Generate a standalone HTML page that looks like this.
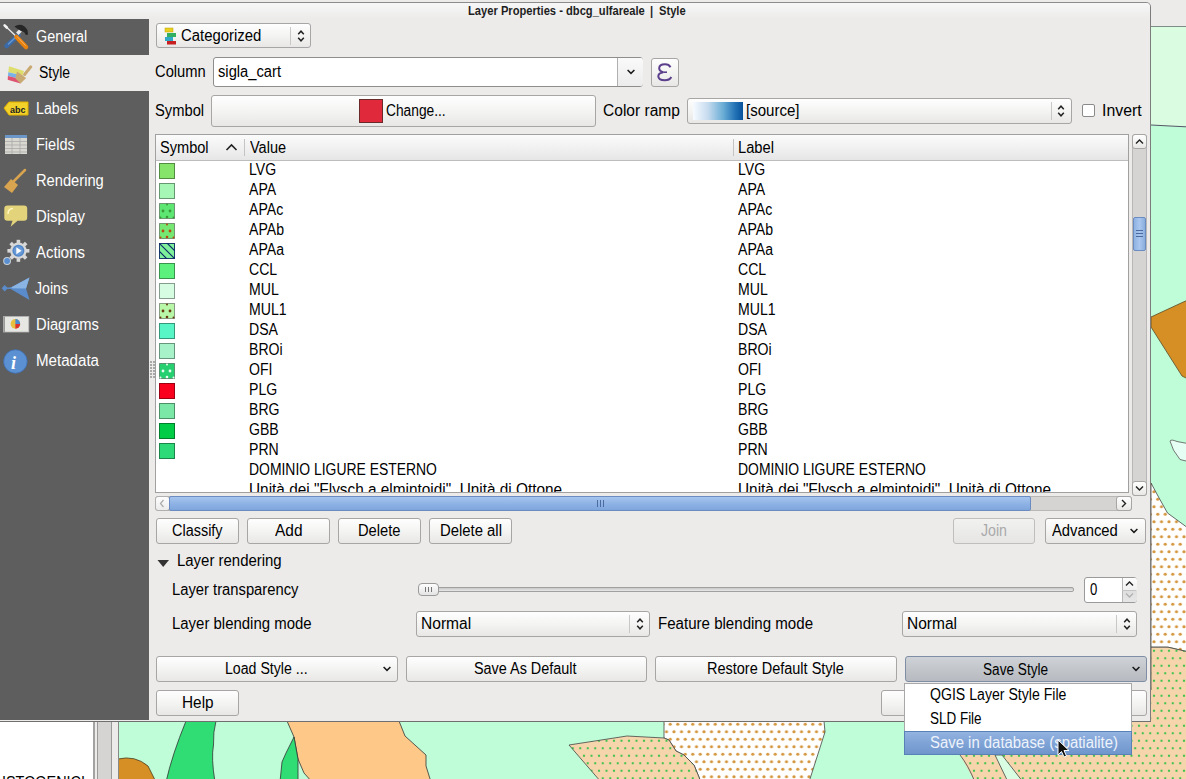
<!DOCTYPE html>
<html><head><meta charset="utf-8"><style>
html,body{margin:0;padding:0;}
body{width:1186px;height:779px;overflow:hidden;position:relative;font-family:'Liberation Sans', sans-serif;background:#befdd8;}
.b{position:absolute;}
.t{position:absolute;white-space:nowrap;font-family:'Liberation Sans', sans-serif;}
</style></head><body>
<svg class="b" style="left:0;top:0" width="1186" height="779">
<defs>
<pattern id="dotO" x="2.75" y="7.95" width="7.5" height="15" patternUnits="userSpaceOnUse"><rect width="7.5" height="15" fill="#ffffff"/><circle cx="3.75" cy="3.75" r="1.6" fill="#d4963c"/><circle cx="0" cy="11.25" r="1.6" fill="#d4963c"/><circle cx="7.5" cy="11.25" r="1.6" fill="#d4963c"/></pattern>
<pattern id="dotG" x="2.75" y="2" width="7.5" height="15" patternUnits="userSpaceOnUse"><rect width="7.5" height="15" fill="#f6d5ad"/><rect x="2.75" y="2.75" width="2" height="2" fill="#3ec24a"/><rect x="-1" y="10.25" width="2" height="2" fill="#3ec24a"/><rect x="6.5" y="10.25" width="2" height="2" fill="#3ec24a"/></pattern>
</defs>
<rect width="1186" height="779" fill="#befdd8"/>
<rect x="0" y="0" width="1186" height="26" fill="#ecebea"/>
<rect x="1151" y="26" width="35" height="1" fill="#7d8c84"/>
<path d="M1151 27 L1190 27 L1190 127 L1170 126 L1151 125 Z" fill="#dafde2"/>
<path d="M1151 125 L1170 126 L1190 127" fill="none" stroke="#556" stroke-width="1"/>
<path d="M1151 317 L1179 304 L1190 299 L1190 380 L1182 376 L1151 327 Z" fill="#d68f24" stroke="#5a4a2a" stroke-width="0.8"/>
<path d="M1190 444 L1177 441.5 Q1171 439 1170 441 Q1172 450 1180 459.5 L1190 462 Z" fill="#e6fff4" stroke="#555" stroke-width="0.8"/>
<path d="M1151 483 Q1160 500 1167.5 513 L1190 529.5 L1190 652.3 L1168 647.2 L1151 647.2 Z" fill="url(#dotO)" stroke="#444" stroke-width="0.8"/>
<path d="M1151 647.2 L1168 647.2 L1190 652.3 L1190 782 L1151 782 Z" fill="url(#dotG)" stroke="#444" stroke-width="0.8"/>
<path d="M118 759 Q135 755 148 766 L156 782 L118 782 Z" fill="#d68f24" stroke="#4a3a20" stroke-width="0.8"/>
<path d="M186 721 L216 721 Q213 732 213.5 745 Q211 758 215 782 L166 782 Q172 755 186 721 Z" fill="#30dc74" stroke="#333" stroke-width="0.8"/>
<path d="M287 721 L399 721 L405 736 L426 755 L426 766 L431 782 L312 782 L304 773 L298 759 L294 737 Z" fill="#fdc888" stroke="#333" stroke-width="0.8"/>
<path d="M294 737 L298 759 L298 782 L280 782 L282 762 L286 753 Z" fill="#30dc74" stroke="#333" stroke-width="0.8"/>
<path d="M664 721 L824 721 L825 732 L809 782 L701 782 L694 765 L684 755 L676 751 L669 740 L664 738 Z" fill="url(#dotO)" stroke="#444" stroke-width="0.8"/>
<path d="M569 745 L627 736 L664 738 L669 740 L676 751 L684 755 L694 765 L701 782 L601 782 Z" fill="url(#dotG)" stroke="#444" stroke-width="0.8"/>
<path d="M955 690 L1190 690 L1190 782 L975 782 L960 755 Z" fill="url(#dotG)"/><path d="M960 755 Q968 765 975 782" fill="none" stroke="#444" stroke-width="0.8"/>
<path d="M995 755 L1002 755 L1023 782 L1008 782 Z" fill="#d8fde2" stroke="#444" stroke-width="0.8"/>
</svg>
<div class="b" style="left:0px;top:722px;width:93px;height:57px;background:#fff;"></div>
<div class="b" style="left:93px;top:722px;width:2px;height:57px;background:#a3a3a3;"></div>
<div class="b" style="left:95px;top:722px;width:2px;height:57px;background:#ecebea;"></div>
<div class="b" style="left:97px;top:722px;width:1px;height:57px;background:#9a9a9a;"></div>
<div class="b" style="left:98px;top:722px;width:13px;height:57px;background:#d6d4d2;"></div>
<div class="b" style="left:111px;top:722px;width:1px;height:57px;background:#9a9a9a;"></div>
<div class="b" style="left:112px;top:722px;width:6px;height:57px;background:#ecebea;"></div>
<div class="b" style="left:118px;top:722px;width:1px;height:57px;background:#888;"></div>
<div class="t" style="left:2.0px;top:774.9px;font-size:16px;line-height:16px;color:#000;font-weight:normal;transform:scaleX(0.900);transform-origin:0 0;">ISTOGENICI</div>
<div class="b" style="left:0px;top:2px;width:1151px;height:720px;background:#ecebea;border-top:1px solid #8c8c8c;border-right:1px solid #7c7c7c;border-bottom:1px solid #6f6f6f;border-top-right-radius:5px;box-sizing:border-box;"></div>
<div class="b" style="left:0px;top:3px;width:1150px;height:16px;background:linear-gradient(#f7f7f7,#ecebea);border-top-right-radius:4px;"></div>
<div class="t" style="left:468.0px;top:4.7px;font-size:12px;line-height:12px;color:#1e1e1e;font-weight:bold;transform:scaleX(0.930);transform-origin:0 0;">Layer Properties - dbcg_ulfareale</div>
<div class="t" style="left:649.6px;top:4.7px;font-size:12px;line-height:12px;color:#1e1e1e;font-weight:bold;transform:scaleX(0.930);transform-origin:0 0;">|</div>
<div class="t" style="left:659.4px;top:4.7px;font-size:12px;line-height:12px;color:#1e1e1e;font-weight:bold;transform:scaleX(0.930);transform-origin:0 0;">Style</div>
<div class="b" style="left:0px;top:19px;width:149px;height:701px;background:#5e5e5e;"></div>
<div class="b" style="left:0px;top:55px;width:149px;height:36px;background:#ecebea;"></div>
<div class="t" style="left:36.0px;top:28.7px;font-size:16px;line-height:16px;color:#fff;font-weight:normal;transform:scaleX(0.899);transform-origin:0 0;">General</div>
<div class="t" style="left:38.5px;top:64.7px;font-size:16px;line-height:16px;color:#000;font-weight:normal;transform:scaleX(0.872);transform-origin:0 0;">Style</div>
<div class="t" style="left:36.0px;top:100.7px;font-size:16px;line-height:16px;color:#fff;font-weight:normal;transform:scaleX(0.891);transform-origin:0 0;">Labels</div>
<div class="t" style="left:36.0px;top:136.7px;font-size:16px;line-height:16px;color:#fff;font-weight:normal;transform:scaleX(0.907);transform-origin:0 0;">Fields</div>
<div class="t" style="left:36.0px;top:172.7px;font-size:16px;line-height:16px;color:#fff;font-weight:normal;transform:scaleX(0.918);transform-origin:0 0;">Rendering</div>
<div class="t" style="left:36.0px;top:208.7px;font-size:16px;line-height:16px;color:#fff;font-weight:normal;transform:scaleX(0.932);transform-origin:0 0;">Display</div>
<div class="t" style="left:36.0px;top:244.7px;font-size:16px;line-height:16px;color:#fff;font-weight:normal;transform:scaleX(0.932);transform-origin:0 0;">Actions</div>
<div class="t" style="left:34.5px;top:280.7px;font-size:16px;line-height:16px;color:#fff;font-weight:normal;transform:scaleX(0.883);transform-origin:0 0;">Joins</div>
<div class="t" style="left:36.0px;top:316.7px;font-size:16px;line-height:16px;color:#fff;font-weight:normal;transform:scaleX(0.920);transform-origin:0 0;">Diagrams</div>
<div class="t" style="left:36.0px;top:352.7px;font-size:16px;line-height:16px;color:#fff;font-weight:normal;transform:scaleX(0.944);transform-origin:0 0;">Metadata</div>
<svg class="b" style="left:0;top:19px" width="40" height="360">
<g>
<path d="M18.5 16 L6.5 27" stroke="#3a6aa8" stroke-width="4.5" stroke-linecap="round"/>
<path d="M8.5 25 L16 18" stroke="#6a9ad0" stroke-width="1.2" stroke-linecap="round"/>
<path d="M17.3 14.7 L20.7 11.3" stroke="#e8e8e8" stroke-width="3.5"/>
<path d="M14.4 7.5 Q18 5 22 6 Q25 7 27.5 11 L28 15.5 L26 16 L24 13 L21 12 L17 9.5 Z" fill="#262626"/>
<path d="M5 6.7 L15 16.3" stroke="#e6e6e6" stroke-width="1.5" stroke-linecap="round"/>
<path d="M4.6 6.3 L6.8 8.5" stroke="#f4f4f4" stroke-width="2.6" stroke-linecap="round"/>
<path d="M16.5 18 L26 28" stroke="#e8820e" stroke-width="4.5" stroke-linecap="round"/>
<path d="M17.5 18 L25.5 26.5" stroke="#f8b060" stroke-width="1" stroke-linecap="round"/>
</g>
<g transform="translate(0,36)">
<path d="M9 11.3 L24 16 L22.5 20.5 L8.3 17.2 Z" fill="#dede6e"/>
<path d="M8.3 17.2 L22.5 20.5 L21.4 24.3 L7.9 21 Z" fill="#7ab2e8"/>
<path d="M7.9 21 L21.4 24.3 L20.5 28.5 L7.7 24.7 Z" fill="#de5272"/>
<path d="M17 16.5 L26.2 23 L20.5 28.5 L15.4 23.6 Z" fill="#c9aa72"/>
<path d="M24.6 19.5 L30.8 11.8" stroke="#c9aa72" stroke-width="3" stroke-linecap="round"/>
</g>
<g transform="translate(0,72)">
<path d="M4 17 L9 11 L28 11 L28 24 L9 24 Z" fill="#f2d22a" stroke="#e0b000" stroke-width="1"/>
<text x="10" y="21.5" font-family="Liberation Sans" font-size="9" font-weight="bold" fill="#222">abc</text>
</g>
<g transform="translate(0,108)">
<rect x="5" y="8" width="22" height="19" fill="#d8d8d0"/>
<rect x="5" y="8" width="22" height="3" fill="#6c96c8"/>
<path d="M5 14.5 H27 M5 18 H27 M5 21.5 H27 M5 25 H27 M12 11 V27 M20 11 V27" stroke="#aaa" stroke-width="0.8"/>
</g>
<g transform="translate(0,144)">
<path d="M14 18 L25 7" stroke="#d9a450" stroke-width="2.5" stroke-linecap="round"/>
<path d="M4 24 L11 16 L18 22 L12 30 Z" fill="#d9a450"/>
</g>
<g transform="translate(0,180)">
<path d="M7.5 6.5 Q4.3 6.5 4.3 9.5 L4.3 18.8 Q4.3 21.8 7.5 21.8 L12.5 21.8 L10.6 27.7 L17.5 21.8 L24 21.8 Q27.2 21.8 27.2 18.8 L27.2 9.5 Q27.2 6.5 24 6.5 Z" fill="#e3d37a"/>
<path d="M8 15 Q8 9.5 13 9.5" fill="none" stroke="#fff6c0" stroke-width="1.5"/>
</g>
<g transform="translate(0,216)">
<rect x="16.6" y="4.8" width="3.6" height="3.5" fill="#d8d8d8" transform="rotate(0 18.4 15.8)"/><rect x="16.6" y="4.8" width="3.6" height="3.5" fill="#d8d8d8" transform="rotate(45 18.4 15.8)"/><rect x="16.6" y="4.8" width="3.6" height="3.5" fill="#d8d8d8" transform="rotate(90 18.4 15.8)"/><rect x="16.6" y="4.8" width="3.6" height="3.5" fill="#d8d8d8" transform="rotate(135 18.4 15.8)"/><rect x="16.6" y="4.8" width="3.6" height="3.5" fill="#d8d8d8" transform="rotate(180 18.4 15.8)"/><rect x="16.6" y="4.8" width="3.6" height="3.5" fill="#d8d8d8" transform="rotate(225 18.4 15.8)"/><rect x="16.6" y="4.8" width="3.6" height="3.5" fill="#d8d8d8" transform="rotate(270 18.4 15.8)"/><rect x="16.6" y="4.8" width="3.6" height="3.5" fill="#d8d8d8" transform="rotate(315 18.4 15.8)"/>
<circle cx="18.4" cy="15.8" r="8.2" fill="#d8d8d8"/>
<circle cx="18.4" cy="15.8" r="6" fill="#4f86c8"/>
<circle cx="18.4" cy="15.8" r="4.6" fill="#6a9ad6"/>
<path d="M16.3 12.3 L21.6 15.8 L16.3 19.3 Z" fill="#fff"/>
<circle cx="7.1" cy="26" r="3.9" fill="#c8d0d8"/>
<circle cx="7.1" cy="26" r="2.9" fill="#5b8fd0"/>
</g>
<g transform="translate(0,252)">
<path d="M9.5 17.2 L29.5 6.6 L26 17.5 L29.5 29 Z" fill="#5a8ccc"/>
<path d="M9.5 17.2 L29.5 6.6 L26 17.5 Z" fill="#8ab4e4"/>
<path d="M4.7 14 L7.7 17.2 L4.7 20.4 L1.7 17.2 Z" fill="#5a8ccc"/>
<path d="M6 17.2 H12" stroke="#5a8ccc" stroke-width="1.5"/>
</g>
<g transform="translate(0,288)">
<rect x="3.5" y="9.6" width="25.3" height="15.4" fill="#e6e6e2" stroke="#b8b8b8" stroke-width="0.8"/>
<rect x="3.5" y="9.6" width="1.5" height="15.4" fill="#9a9a9a"/>
<circle cx="15.4" cy="16.9" r="4.8" fill="#e8c040"/>
<path d="M15.4 16.9 L15.4 12.1 A4.8 4.8 0 0 1 20.2 16.9 Z" fill="#4a8ad0"/>
<path d="M15.4 16.9 L20.2 16.9 A4.8 4.8 0 0 1 15.4 21.7 Z" fill="#d83030"/>
</g>
<g transform="translate(0,324)">
<circle cx="15.4" cy="18.5" r="11.8" fill="#5b90d2"/>
<circle cx="15.4" cy="18.5" r="11.8" fill="none" stroke="#3f6fae" stroke-width="0.8"/>
<text x="11" y="26" font-family="Liberation Serif" font-size="18" font-style="italic" font-weight="bold" fill="#fff">i</text>
</g>
</svg>
<div class="b" style="left:150px;top:361px;width:1.5px;height:1.5px;background:#a8a8a8;"></div>
<div class="b" style="left:153px;top:361px;width:1.5px;height:1.5px;background:#a8a8a8;"></div>
<div class="b" style="left:150px;top:364px;width:1.5px;height:1.5px;background:#a8a8a8;"></div>
<div class="b" style="left:153px;top:364px;width:1.5px;height:1.5px;background:#a8a8a8;"></div>
<div class="b" style="left:150px;top:367px;width:1.5px;height:1.5px;background:#a8a8a8;"></div>
<div class="b" style="left:153px;top:367px;width:1.5px;height:1.5px;background:#a8a8a8;"></div>
<div class="b" style="left:150px;top:370px;width:1.5px;height:1.5px;background:#a8a8a8;"></div>
<div class="b" style="left:153px;top:370px;width:1.5px;height:1.5px;background:#a8a8a8;"></div>
<div class="b" style="left:150px;top:373px;width:1.5px;height:1.5px;background:#a8a8a8;"></div>
<div class="b" style="left:153px;top:373px;width:1.5px;height:1.5px;background:#a8a8a8;"></div>
<div class="b" style="left:150px;top:376px;width:1.5px;height:1.5px;background:#a8a8a8;"></div>
<div class="b" style="left:153px;top:376px;width:1.5px;height:1.5px;background:#a8a8a8;"></div>
<div class="b" style="left:156px;top:23px;width:155px;height:25px;background:linear-gradient(#fefefe,#f4f4f3 50%,#e8e7e6);border:1px solid #a6a6a6;border-radius:3px;box-sizing:border-box;"></div>
<div class="b" style="left:290px;top:27px;width:1px;height:18px;background:#c8c8c8;"></div>
<svg class="b" style="left:296.0px;top:27.5px" width="10" height="16"><path d="M2.2 6.2 L5 3.2 L7.8 6.2 M2.2 9.8 L5 12.8 L7.8 9.8" fill="none" stroke="#222" stroke-width="1.5"/></svg>
<svg class="b" style="left:164px;top:27px" width="14" height="18">
<rect x="1" y="1" width="8" height="4" fill="#e8d020" stroke="#c0a000" stroke-width="0.5"/>
<rect x="3" y="6" width="9" height="4" fill="#30b060"/>
<rect x="1" y="10" width="8" height="4" fill="#30a8c8"/>
<rect x="3" y="14" width="9" height="3.5" fill="#c82020"/>
</svg>
<div class="t" style="left:180.7px;top:27.9px;font-size:16px;line-height:16px;color:#000;font-weight:normal;transform:scaleX(0.931);transform-origin:0 0;">Categorized</div>
<div class="t" style="left:154.5px;top:63.7px;font-size:16px;line-height:16px;color:#000;font-weight:normal;transform:scaleX(0.920);transform-origin:0 0;">Column</div>
<div class="b" style="left:213px;top:57px;width:430px;height:30px;background:#fff;border:1px solid #8d8d8d;border-radius:3px;box-sizing:border-box;"></div>
<div class="b" style="left:617px;top:58px;width:25px;height:28px;background:linear-gradient(#fafafa,#ececec);border-left:1px solid #b0b0b0;border-radius:0 2px 2px 0;"></div>
<svg class="b" style="left:625px;top:68px" width="12" height="8"><path d="M2.6 2 L6 5.4 L9.4 2" fill="none" stroke="#1a1a1a" stroke-width="1.5"/></svg>
<div class="t" style="left:217.5px;top:63.7px;font-size:16px;line-height:16px;color:#000;font-weight:normal;transform:scaleX(0.920);transform-origin:0 0;">sigla_cart</div>
<div class="b" style="left:651px;top:58px;width:28px;height:29px;background:linear-gradient(#fefefe,#f4f4f3 50%,#e8e7e6);border:1px solid #a7a6a5;border-radius:3px;box-sizing:border-box;"></div>
<svg class="b" style="left:651px;top:58px" width="28" height="29"><path d="M19.5 9.2 Q18 6.3 14 6.3 Q8.2 6.3 8.2 10.3 Q8.2 13.2 12.2 14.2 Q7.3 15 7.3 18.3 Q7.3 22.3 13.8 22.3 Q18.6 22.3 20.3 19" fill="none" stroke="#5b3f8c" stroke-width="2"/><path d="M12.2 14.2 L16 14.2" stroke="#5b3f8c" stroke-width="1.6"/></svg>
<div class="t" style="left:154.5px;top:102.9px;font-size:16px;line-height:16px;color:#000;font-weight:normal;transform:scaleX(0.920);transform-origin:0 0;">Symbol</div>
<div class="b" style="left:211px;top:95px;width:385px;height:32px;background:linear-gradient(#fefefe,#f4f4f3 50%,#e8e7e6);border:1px solid #a7a6a5;border-radius:3px;box-sizing:border-box;"></div>
<div class="b" style="left:359px;top:99px;width:24px;height:24px;background:#e0293b;border:1px solid #6a2a2a;box-sizing:border-box;"></div>
<div class="t" style="left:386.0px;top:102.9px;font-size:16px;line-height:16px;color:#000;font-weight:normal;transform:scaleX(0.860);transform-origin:0 0;">Change...</div>
<div class="t" style="left:602.5px;top:102.9px;font-size:16px;line-height:16px;color:#000;font-weight:normal;transform:scaleX(0.972);transform-origin:0 0;">Color ramp</div>
<div class="b" style="left:687px;top:98px;width:385px;height:26px;background:linear-gradient(#fefefe,#f4f4f3 50%,#e8e7e6);border:1px solid #a7a6a5;border-radius:3px;box-sizing:border-box;"></div>
<div class="b" style="left:693px;top:102px;width:50px;height:18px;background:linear-gradient(90deg,#f7fbff,#c6dbef 30%,#6baed6 60%,#2171b5 85%,#08519c);"></div>
<div class="t" style="left:746.0px;top:102.9px;font-size:16px;line-height:16px;color:#000;font-weight:normal;transform:scaleX(0.940);transform-origin:0 0;">[source]</div>
<div class="b" style="left:1051px;top:102px;width:1px;height:18px;background:#c8c8c8;"></div>
<svg class="b" style="left:1055.5px;top:103px" width="10" height="16"><path d="M2.2 6.2 L5 3.2 L7.8 6.2 M2.2 9.8 L5 12.8 L7.8 9.8" fill="none" stroke="#222" stroke-width="1.5"/></svg>
<div class="b" style="left:1082px;top:104px;width:13px;height:13px;background:#fff;border:1px solid #8a8a8a;border-radius:2px;box-sizing:border-box;"></div>
<div class="t" style="left:1102.0px;top:102.9px;font-size:16px;line-height:16px;color:#000;font-weight:normal;transform:scaleX(0.990);transform-origin:0 0;">Invert</div>
<div class="b" style="left:155px;top:134px;width:974px;height:359px;background:#fff;border:1px solid #a0a0a0;box-sizing:border-box;"></div>
<div class="b" style="left:156px;top:135px;width:972px;height:25px;background:linear-gradient(#fbfbfb,#efefef 60%,#e6e6e6);border-bottom:1px solid #bdbdbd;"></div>
<div class="b" style="left:244px;top:139px;width:1px;height:17px;background:#c4c4c4;"></div>
<div class="b" style="left:733px;top:139px;width:1px;height:17px;background:#c4c4c4;"></div>
<div class="t" style="left:159.6px;top:139.7px;font-size:16px;line-height:16px;color:#000;font-weight:normal;transform:scaleX(0.911);transform-origin:0 0;">Symbol</div>
<svg class="b" style="left:225px;top:142px" width="13" height="10"><path d="M1.5 8 L6.5 3 L11.5 8" fill="none" stroke="#222" stroke-width="1.6"/></svg>
<div class="t" style="left:249.8px;top:139.7px;font-size:16px;line-height:16px;color:#000;font-weight:normal;transform:scaleX(0.906);transform-origin:0 0;">Value</div>
<div class="t" style="left:738.4px;top:139.7px;font-size:16px;line-height:16px;color:#000;font-weight:normal;transform:scaleX(0.920);transform-origin:0 0;">Label</div>
<div class="b" style="left:156px;top:160px;width:972px;height:332px;overflow:hidden">
<div class="b" style="left:3px;top:3px;width:16px;height:16px;background:#86e46a;border:1px solid rgba(0,0,0,0.38);box-sizing:border-box"></div>
<div class="b" style="left:3px;top:23px;width:16px;height:16px;background:#a6f6b6;border:1px solid rgba(0,0,0,0.38);box-sizing:border-box"></div>
<svg class="b" style="left:3px;top:43px" width="16" height="16"><rect x="0.5" y="0.5" width="15" height="15" fill="#5ee672" stroke="rgba(0,0,0,0.38)" stroke-width="1"/><circle cx="4" cy="8" r="1.4" fill="#3a9a3a"/><circle cx="11" cy="8" r="1.4" fill="#3a9a3a"/><circle cx="8" cy="14" r="1.3" fill="#3a9a3a"/><circle cx="8" cy="1.5" r="1" fill="#3a9a3a"/><circle cx="14.5" cy="14.5" r="1" fill="#3a9a3a"/><circle cx="1.5" cy="14.5" r="1" fill="#3a9a3a"/></svg>
<svg class="b" style="left:3px;top:63px" width="16" height="16"><rect x="0.5" y="0.5" width="15" height="15" fill="#74e872" stroke="rgba(0,0,0,0.38)" stroke-width="1"/><circle cx="4" cy="8" r="1.4" fill="#b84a10"/><circle cx="11" cy="8" r="1.4" fill="#b84a10"/><circle cx="8" cy="14" r="1.3" fill="#b84a10"/><circle cx="8" cy="1.5" r="1" fill="#b84a10"/><circle cx="14.5" cy="14.5" r="1" fill="#b84a10"/><circle cx="1.5" cy="14.5" r="1" fill="#b84a10"/></svg>
<svg class="b" style="left:3px;top:83px" width="16" height="16"><rect x="0.5" y="0.5" width="15" height="15" fill="#7ef09a" stroke="#1a3a6a" stroke-width="1"/><path d="M0 0 L16 16 M0 8 L8 16 M8 0 L16 8" stroke="#0a2a6a" stroke-width="1.1"/></svg>
<div class="b" style="left:3px;top:103px;width:16px;height:16px;background:#5cf07c;border:1px solid rgba(0,0,0,0.38);box-sizing:border-box"></div>
<div class="b" style="left:3px;top:123px;width:16px;height:16px;background:#d6fde2;border:1px solid rgba(0,0,0,0.38);box-sizing:border-box"></div>
<svg class="b" style="left:3px;top:143px" width="16" height="16"><rect x="0.5" y="0.5" width="15" height="15" fill="#b8f6a8" stroke="rgba(0,0,0,0.38)" stroke-width="1"/><circle cx="4" cy="8" r="1.4" fill="#6a3a10"/><circle cx="11" cy="8" r="1.4" fill="#6a3a10"/><circle cx="8" cy="14" r="1.3" fill="#6a3a10"/><circle cx="8" cy="1.5" r="1" fill="#6a3a10"/><circle cx="14.5" cy="14.5" r="1" fill="#6a3a10"/><circle cx="1.5" cy="14.5" r="1" fill="#6a3a10"/></svg>
<div class="b" style="left:3px;top:163px;width:16px;height:16px;background:#58f6c6;border:1px solid rgba(0,0,0,0.38);box-sizing:border-box"></div>
<div class="b" style="left:3px;top:183px;width:16px;height:16px;background:#a8f2ca;border:1px solid rgba(0,0,0,0.38);box-sizing:border-box"></div>
<svg class="b" style="left:3px;top:203px" width="16" height="16"><rect x="0.5" y="0.5" width="15" height="15" fill="#26d070" stroke="rgba(0,0,0,0.38)" stroke-width="1"/><circle cx="4" cy="8" r="1.4" fill="#e8fff0"/><circle cx="11" cy="8" r="1.4" fill="#e8fff0"/><circle cx="8" cy="14" r="1.3" fill="#e8fff0"/><circle cx="8" cy="1.5" r="1" fill="#e8fff0"/><circle cx="14.5" cy="14.5" r="1" fill="#e8fff0"/><circle cx="1.5" cy="14.5" r="1" fill="#e8fff0"/></svg>
<div class="b" style="left:3px;top:223px;width:16px;height:16px;background:#f8001e;border:1px solid rgba(0,0,0,0.38);box-sizing:border-box"></div>
<div class="b" style="left:3px;top:243px;width:16px;height:16px;background:#7ce8a8;border:1px solid rgba(0,0,0,0.38);box-sizing:border-box"></div>
<div class="b" style="left:3px;top:263px;width:16px;height:16px;background:#00cc46;border:1px solid rgba(0,0,0,0.38);box-sizing:border-box"></div>
<div class="b" style="left:3px;top:283px;width:16px;height:16px;background:#2ed978;border:1px solid rgba(0,0,0,0.38);box-sizing:border-box"></div>
<div class="t" style="left:92.6px;top:1.9px;font-size:16px;line-height:16px;color:#000;font-weight:normal;transform:scaleX(0.880);transform-origin:0 0;">LVG</div>
<div class="t" style="left:581.6px;top:1.9px;font-size:16px;line-height:16px;color:#000;font-weight:normal;transform:scaleX(0.880);transform-origin:0 0;">LVG</div>
<div class="t" style="left:92.6px;top:21.9px;font-size:16px;line-height:16px;color:#000;font-weight:normal;transform:scaleX(0.880);transform-origin:0 0;">APA</div>
<div class="t" style="left:581.6px;top:21.9px;font-size:16px;line-height:16px;color:#000;font-weight:normal;transform:scaleX(0.880);transform-origin:0 0;">APA</div>
<div class="t" style="left:92.6px;top:41.9px;font-size:16px;line-height:16px;color:#000;font-weight:normal;transform:scaleX(0.880);transform-origin:0 0;">APAc</div>
<div class="t" style="left:581.6px;top:41.9px;font-size:16px;line-height:16px;color:#000;font-weight:normal;transform:scaleX(0.880);transform-origin:0 0;">APAc</div>
<div class="t" style="left:92.6px;top:61.9px;font-size:16px;line-height:16px;color:#000;font-weight:normal;transform:scaleX(0.880);transform-origin:0 0;">APAb</div>
<div class="t" style="left:581.6px;top:61.9px;font-size:16px;line-height:16px;color:#000;font-weight:normal;transform:scaleX(0.880);transform-origin:0 0;">APAb</div>
<div class="t" style="left:92.6px;top:81.9px;font-size:16px;line-height:16px;color:#000;font-weight:normal;transform:scaleX(0.880);transform-origin:0 0;">APAa</div>
<div class="t" style="left:581.6px;top:81.9px;font-size:16px;line-height:16px;color:#000;font-weight:normal;transform:scaleX(0.880);transform-origin:0 0;">APAa</div>
<div class="t" style="left:92.6px;top:101.9px;font-size:16px;line-height:16px;color:#000;font-weight:normal;transform:scaleX(0.880);transform-origin:0 0;">CCL</div>
<div class="t" style="left:581.6px;top:101.9px;font-size:16px;line-height:16px;color:#000;font-weight:normal;transform:scaleX(0.880);transform-origin:0 0;">CCL</div>
<div class="t" style="left:92.6px;top:121.9px;font-size:16px;line-height:16px;color:#000;font-weight:normal;transform:scaleX(0.880);transform-origin:0 0;">MUL</div>
<div class="t" style="left:581.6px;top:121.9px;font-size:16px;line-height:16px;color:#000;font-weight:normal;transform:scaleX(0.880);transform-origin:0 0;">MUL</div>
<div class="t" style="left:92.6px;top:141.9px;font-size:16px;line-height:16px;color:#000;font-weight:normal;transform:scaleX(0.880);transform-origin:0 0;">MUL1</div>
<div class="t" style="left:581.6px;top:141.9px;font-size:16px;line-height:16px;color:#000;font-weight:normal;transform:scaleX(0.880);transform-origin:0 0;">MUL1</div>
<div class="t" style="left:92.6px;top:161.9px;font-size:16px;line-height:16px;color:#000;font-weight:normal;transform:scaleX(0.880);transform-origin:0 0;">DSA</div>
<div class="t" style="left:581.6px;top:161.9px;font-size:16px;line-height:16px;color:#000;font-weight:normal;transform:scaleX(0.880);transform-origin:0 0;">DSA</div>
<div class="t" style="left:92.6px;top:181.9px;font-size:16px;line-height:16px;color:#000;font-weight:normal;transform:scaleX(0.880);transform-origin:0 0;">BROi</div>
<div class="t" style="left:581.6px;top:181.9px;font-size:16px;line-height:16px;color:#000;font-weight:normal;transform:scaleX(0.880);transform-origin:0 0;">BROi</div>
<div class="t" style="left:92.6px;top:201.9px;font-size:16px;line-height:16px;color:#000;font-weight:normal;transform:scaleX(0.880);transform-origin:0 0;">OFI</div>
<div class="t" style="left:581.6px;top:201.9px;font-size:16px;line-height:16px;color:#000;font-weight:normal;transform:scaleX(0.880);transform-origin:0 0;">OFI</div>
<div class="t" style="left:92.6px;top:221.9px;font-size:16px;line-height:16px;color:#000;font-weight:normal;transform:scaleX(0.880);transform-origin:0 0;">PLG</div>
<div class="t" style="left:581.6px;top:221.9px;font-size:16px;line-height:16px;color:#000;font-weight:normal;transform:scaleX(0.880);transform-origin:0 0;">PLG</div>
<div class="t" style="left:92.6px;top:241.9px;font-size:16px;line-height:16px;color:#000;font-weight:normal;transform:scaleX(0.880);transform-origin:0 0;">BRG</div>
<div class="t" style="left:581.6px;top:241.9px;font-size:16px;line-height:16px;color:#000;font-weight:normal;transform:scaleX(0.880);transform-origin:0 0;">BRG</div>
<div class="t" style="left:92.6px;top:261.9px;font-size:16px;line-height:16px;color:#000;font-weight:normal;transform:scaleX(0.880);transform-origin:0 0;">GBB</div>
<div class="t" style="left:581.6px;top:261.9px;font-size:16px;line-height:16px;color:#000;font-weight:normal;transform:scaleX(0.880);transform-origin:0 0;">GBB</div>
<div class="t" style="left:92.6px;top:281.9px;font-size:16px;line-height:16px;color:#000;font-weight:normal;transform:scaleX(0.880);transform-origin:0 0;">PRN</div>
<div class="t" style="left:581.6px;top:281.9px;font-size:16px;line-height:16px;color:#000;font-weight:normal;transform:scaleX(0.880);transform-origin:0 0;">PRN</div>
<div class="t" style="left:92.6px;top:301.9px;font-size:16px;line-height:16px;color:#000;font-weight:normal;transform:scaleX(0.870);transform-origin:0 0;">DOMINIO LIGURE ESTERNO</div>
<div class="t" style="left:581.6px;top:301.9px;font-size:16px;line-height:16px;color:#000;font-weight:normal;transform:scaleX(0.870);transform-origin:0 0;">DOMINIO LIGURE ESTERNO</div>
<div class="t" style="left:92.6px;top:321.9px;font-size:16px;line-height:16px;color:#000;font-weight:normal;transform:scaleX(0.960);transform-origin:0 0;">Unità dei &quot;Flysch a elmintoidi&quot;, Unità di Ottone</div>
<div class="t" style="left:581.6px;top:321.9px;font-size:16px;line-height:16px;color:#000;font-weight:normal;transform:scaleX(0.960);transform-origin:0 0;">Unità dei &quot;Flysch a elmintoidi&quot;, Unità di Ottone</div>
</div>
<div class="b" style="left:1132px;top:134px;width:15px;height:362px;background:#d6d4d2;border:1px solid #b9b7b5;border-radius:3px;box-sizing:border-box;"></div>
<div class="b" style="left:1132px;top:134px;width:15px;height:15px;background:linear-gradient(#fefefe,#f4f4f3 50%,#e8e7e6);border:1px solid #a7a6a5;border-radius:3px;box-sizing:border-box;"></div>
<svg class="b" style="left:1134px;top:137px" width="11" height="9"><path d="M2 6.5 L5.5 3 L9 6.5" fill="none" stroke="#222" stroke-width="1.4"/></svg>
<div class="b" style="left:1132px;top:481px;width:15px;height:15px;background:linear-gradient(#fefefe,#f4f4f3 50%,#e8e7e6);border:1px solid #a7a6a5;border-radius:3px;box-sizing:border-box;"></div>
<svg class="b" style="left:1134px;top:484px" width="11" height="9"><path d="M2 2.5 L5.5 6 L9 2.5" fill="none" stroke="#222" stroke-width="1.4"/></svg>
<div class="b" style="left:1133px;top:217px;width:13px;height:34px;background:linear-gradient(90deg,#8fb2e2,#a9c6ee 50%,#8aaedd);border:1px solid #6a8cc0;border-radius:2px;box-sizing:border-box;"></div>
<div class="b" style="left:1136px;top:230px;width:7px;height:1px;background:#4a6aa0;"></div>
<div class="b" style="left:1136px;top:233px;width:7px;height:1px;background:#4a6aa0;"></div>
<div class="b" style="left:1136px;top:236px;width:7px;height:1px;background:#4a6aa0;"></div>
<div class="b" style="left:155px;top:496px;width:977px;height:15px;background:#d6d4d2;border:1px solid #b9b7b5;border-radius:3px;box-sizing:border-box;"></div>
<div class="b" style="left:155px;top:496px;width:15px;height:15px;background:linear-gradient(#fdfdfd,#ececec);border:1px solid #b0b0b0;border-radius:3px;box-sizing:border-box;"></div>
<svg class="b" style="left:157px;top:498px" width="11" height="11"><path d="M6.5 2 L3.5 5.5 L6.5 9" fill="none" stroke="#aaa" stroke-width="1.2"/></svg>
<div class="b" style="left:169px;top:496px;width:862px;height:15px;background:linear-gradient(#a6c4ee,#8bb0e4 60%,#7fa6dc);border:1px solid #6a8cc0;border-radius:2px;box-sizing:border-box;"></div>
<div class="b" style="left:597px;top:500px;width:1px;height:7px;background:#4a6aa0;"></div>
<div class="b" style="left:600px;top:500px;width:1px;height:7px;background:#4a6aa0;"></div>
<div class="b" style="left:603px;top:500px;width:1px;height:7px;background:#4a6aa0;"></div>
<div class="b" style="left:1116px;top:496px;width:16px;height:15px;background:linear-gradient(#fefefe,#f4f4f3 50%,#e8e7e6);border:1px solid #a7a6a5;border-radius:3px;box-sizing:border-box;"></div>
<svg class="b" style="left:1118px;top:498px" width="11" height="11"><path d="M4 2 L7.5 5.5 L4 9" fill="none" stroke="#222" stroke-width="1.4"/></svg>
<div class="b" style="left:156px;top:518px;width:83px;height:26px;background:linear-gradient(#fefefe,#f4f4f3 50%,#e8e7e6);border:1px solid #a7a6a5;border-radius:3px;box-sizing:border-box;"></div>
<div class="t" style="left:172.2px;top:522.9px;font-size:16px;line-height:16px;color:#000;font-weight:normal;transform:scaleX(0.903);transform-origin:0 0;">Classify</div>
<div class="b" style="left:247px;top:518px;width:83px;height:26px;background:linear-gradient(#fefefe,#f4f4f3 50%,#e8e7e6);border:1px solid #a7a6a5;border-radius:3px;box-sizing:border-box;"></div>
<div class="t" style="left:274.8px;top:522.9px;font-size:16px;line-height:16px;color:#000;font-weight:normal;transform:scaleX(0.966);transform-origin:0 0;">Add</div>
<div class="b" style="left:338px;top:518px;width:83px;height:26px;background:linear-gradient(#fefefe,#f4f4f3 50%,#e8e7e6);border:1px solid #a7a6a5;border-radius:3px;box-sizing:border-box;"></div>
<div class="t" style="left:358.2px;top:522.9px;font-size:16px;line-height:16px;color:#000;font-weight:normal;transform:scaleX(0.919);transform-origin:0 0;">Delete</div>
<div class="b" style="left:429px;top:518px;width:83px;height:26px;background:linear-gradient(#fefefe,#f4f4f3 50%,#e8e7e6);border:1px solid #a7a6a5;border-radius:3px;box-sizing:border-box;"></div>
<div class="t" style="left:439.5px;top:522.9px;font-size:16px;line-height:16px;color:#000;font-weight:normal;transform:scaleX(0.929);transform-origin:0 0;">Delete all</div>
<div class="b" style="left:953px;top:518px;width:82px;height:26px;background:linear-gradient(#f1f1f0,#e6e5e4);border:1px solid #bfbebd;border-radius:3px;box-sizing:border-box;"></div>
<div class="t" style="left:981.0px;top:522.9px;font-size:16px;line-height:16px;color:#a9a9a9;font-weight:normal;transform:scaleX(0.886);transform-origin:0 0;">Join</div>
<div class="b" style="left:1045px;top:518px;width:101px;height:26px;background:linear-gradient(#fefefe,#f4f4f3 50%,#e8e7e6);border:1px solid #a7a6a5;border-radius:3px;box-sizing:border-box;"></div>
<div class="t" style="left:1052.0px;top:522.9px;font-size:16px;line-height:16px;color:#000;font-weight:normal;transform:scaleX(0.925);transform-origin:0 0;">Advanced</div>
<svg class="b" style="left:1128px;top:527px" width="12" height="8"><path d="M2.6 2 L6 5.4 L9.4 2" fill="none" stroke="#1a1a1a" stroke-width="1.5"/></svg>
<svg class="b" style="left:157px;top:559px" width="13" height="9"><path d="M0.5 1 L12 1 L6.2 8 Z" fill="#333"/></svg>
<div class="t" style="left:177.3px;top:553.4px;font-size:16px;line-height:16px;color:#000;font-weight:normal;transform:scaleX(0.934);transform-origin:0 0;">Layer rendering</div>
<div class="t" style="left:172.3px;top:582.1px;font-size:16px;line-height:16px;color:#000;font-weight:normal;transform:scaleX(0.923);transform-origin:0 0;">Layer transparency</div>
<div class="b" style="left:420px;top:587px;width:654px;height:5px;background:linear-gradient(#c8c8c8,#e8e8e8);border:1px solid #a0a0a0;border-radius:2px;box-sizing:border-box;"></div>
<div class="b" style="left:418px;top:583px;width:21px;height:13px;background:linear-gradient(#fdfdfd,#e4e4e4);border:1px solid #9a9a9a;border-radius:4px;box-sizing:border-box;"></div>
<div class="b" style="left:425px;top:587px;width:1px;height:5px;background:#777;"></div>
<div class="b" style="left:428px;top:587px;width:1px;height:5px;background:#777;"></div>
<div class="b" style="left:431px;top:587px;width:1px;height:5px;background:#777;"></div>
<div class="b" style="left:1084px;top:577px;width:53px;height:26px;background:#fff;border:1px solid #9a9a9a;border-radius:3px;box-sizing:border-box;"></div>
<div class="b" style="left:1122px;top:578px;width:14px;height:24px;background:linear-gradient(#fdfdfd,#f0f0f0 50%,#dedede 50%,#e6e6e6);border-left:1px solid #b8b8b8;border-radius:0 2px 2px 0;"></div>
<div class="b" style="left:1122px;top:590px;width:14px;height:1px;background:#c4c4c4;"></div>
<svg class="b" style="left:1124px;top:579px" width="11" height="22"><path d="M2 6.5 L5.5 3 L9 6.5" fill="none" stroke="#222" stroke-width="1.4"/><path d="M2 14.5 L5.5 18 L9 14.5" fill="none" stroke="#b0b0b0" stroke-width="1.3"/></svg>
<div class="t" style="left:1089.5px;top:581.9px;font-size:16px;line-height:16px;color:#000;font-weight:normal;transform:scaleX(0.820);transform-origin:0 0;">0</div>
<div class="t" style="left:172.3px;top:615.9px;font-size:16px;line-height:16px;color:#000;font-weight:normal;transform:scaleX(0.934);transform-origin:0 0;">Layer blending mode</div>
<div class="b" style="left:416px;top:611px;width:234px;height:26px;background:linear-gradient(#fefefe,#f4f4f3 50%,#e8e7e6);border:1px solid #a7a6a5;border-radius:3px;box-sizing:border-box;"></div>
<div class="t" style="left:421.2px;top:615.9px;font-size:16px;line-height:16px;color:#000;font-weight:normal;transform:scaleX(0.974);transform-origin:0 0;">Normal</div>
<div class="b" style="left:629px;top:615px;width:1px;height:18px;background:#c8c8c8;"></div>
<svg class="b" style="left:634.5px;top:616px" width="10" height="16"><path d="M2.2 6.2 L5 3.2 L7.8 6.2 M2.2 9.8 L5 12.8 L7.8 9.8" fill="none" stroke="#222" stroke-width="1.5"/></svg>
<div class="t" style="left:658.3px;top:615.9px;font-size:16px;line-height:16px;color:#000;font-weight:normal;transform:scaleX(0.942);transform-origin:0 0;">Feature blending mode</div>
<div class="b" style="left:902px;top:611px;width:235px;height:26px;background:linear-gradient(#fefefe,#f4f4f3 50%,#e8e7e6);border:1px solid #a7a6a5;border-radius:3px;box-sizing:border-box;"></div>
<div class="t" style="left:907.3px;top:615.9px;font-size:16px;line-height:16px;color:#000;font-weight:normal;transform:scaleX(0.970);transform-origin:0 0;">Normal</div>
<div class="b" style="left:1116px;top:615px;width:1px;height:18px;background:#c8c8c8;"></div>
<svg class="b" style="left:1121.5px;top:616px" width="10" height="16"><path d="M2.2 6.2 L5 3.2 L7.8 6.2 M2.2 9.8 L5 12.8 L7.8 9.8" fill="none" stroke="#222" stroke-width="1.5"/></svg>
<div class="b" style="left:156px;top:656px;width:242px;height:26px;background:linear-gradient(#fefefe,#f4f4f3 50%,#e8e7e6);border:1px solid #a7a6a5;border-radius:3px;box-sizing:border-box;"></div>
<div class="t" style="left:225.2px;top:660.9px;font-size:16px;line-height:16px;color:#000;font-weight:normal;transform:scaleX(0.884);transform-origin:0 0;">Load Style ...</div>
<svg class="b" style="left:380.5px;top:665.0px" width="12" height="8"><path d="M2.6 2 L6 5.4 L9.4 2" fill="none" stroke="#1a1a1a" stroke-width="1.5"/></svg>
<div class="b" style="left:406px;top:656px;width:241px;height:26px;background:linear-gradient(#fefefe,#f4f4f3 50%,#e8e7e6);border:1px solid #a7a6a5;border-radius:3px;box-sizing:border-box;"></div>
<div class="t" style="left:474.2px;top:660.9px;font-size:16px;line-height:16px;color:#000;font-weight:normal;transform:scaleX(0.900);transform-origin:0 0;">Save As Default</div>
<div class="b" style="left:655px;top:656px;width:242px;height:26px;background:linear-gradient(#fefefe,#f4f4f3 50%,#e8e7e6);border:1px solid #a7a6a5;border-radius:3px;box-sizing:border-box;"></div>
<div class="t" style="left:707.2px;top:660.9px;font-size:16px;line-height:16px;color:#000;font-weight:normal;transform:scaleX(0.905);transform-origin:0 0;">Restore Default Style</div>
<div class="b" style="left:905px;top:656px;width:242px;height:26px;background:linear-gradient(#cfd2d6,#c2c6cb 50%,#b7bbc1);border:1px solid #7f8ea4;border-radius:3px;box-sizing:border-box;"></div>
<div class="t" style="left:982.9px;top:661.9px;font-size:16px;line-height:16px;color:#000;font-weight:normal;transform:scaleX(0.852);transform-origin:0 0;">Save Style</div>
<svg class="b" style="left:1129.5px;top:665.0px" width="12" height="8"><path d="M2.6 2 L6 5.4 L9.4 2" fill="none" stroke="#1a1a1a" stroke-width="1.5"/></svg>
<div class="b" style="left:156px;top:690px;width:83px;height:26px;background:linear-gradient(#fefefe,#f4f4f3 50%,#e8e7e6);border:1px solid #a7a6a5;border-radius:3px;box-sizing:border-box;"></div>
<div class="t" style="left:181.7px;top:695.4px;font-size:16px;line-height:16px;color:#000;font-weight:normal;transform:scaleX(0.960);transform-origin:0 0;">Help</div>
<div class="b" style="left:881px;top:690px;width:266px;height:26px;background:linear-gradient(#fefefe,#f4f4f3 50%,#e8e7e6);border:1px solid #a7a6a5;border-radius:3px;box-sizing:border-box;"></div>
<div class="b" style="left:904px;top:683px;width:228px;height:72px;background:#fff;border:1px solid #a8a8a8;box-sizing:border-box;"></div>
<div class="t" style="left:929.5px;top:686.9px;font-size:16px;line-height:16px;color:#000;font-weight:normal;transform:scaleX(0.882);transform-origin:0 0;">QGIS Layer Style File</div>
<div class="t" style="left:929.5px;top:711.0px;font-size:16px;line-height:16px;color:#000;font-weight:normal;transform:scaleX(0.841);transform-origin:0 0;">SLD File</div>
<div class="b" style="left:904px;top:731px;width:228px;height:24px;background:linear-gradient(#93b3e0,#7fa3d6 50%,#6f96cc);border:1px solid #5a80b8;box-sizing:border-box;"></div>
<div class="t" style="left:929.5px;top:735.1px;font-size:16px;line-height:16px;color:#eef3fb;font-weight:normal;transform:scaleX(0.931);transform-origin:0 0;">Save in database (spatialite)</div>
<svg class="b" style="left:1057px;top:739px" width="14" height="20"><path d="M1 1 L1 16 L4.5 12.5 L7 18 L9.5 17 L7 11.5 L12 11.5 Z" fill="#111" stroke="#fff" stroke-width="1"/></svg>
</body></html>
